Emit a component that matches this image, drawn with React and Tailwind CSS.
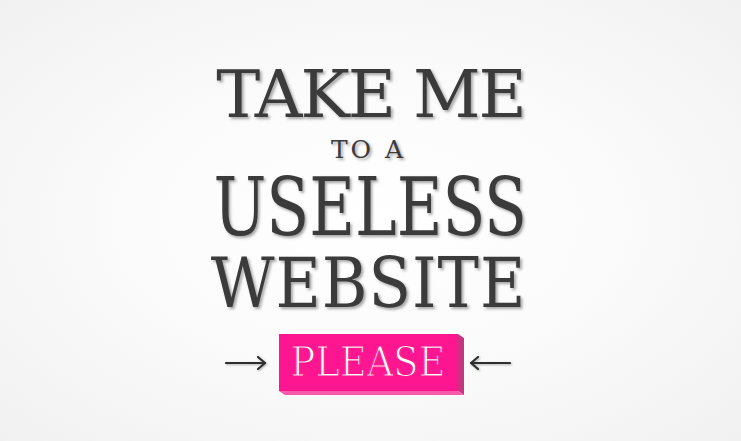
export default function App() {
  const shadow = '[text-shadow:2px_2px_3px_rgba(0,0,0,0.35)]';
  return (
    <div className="w-full h-[441px] overflow-hidden bg-[radial-gradient(ellipse_at_center,#ffffff_0%,#fbfbfb_45%,#f1f1f1_100%)] font-['DejaVu_Serif',serif] text-[#3b3b3b]">
      <div className="flex flex-col items-center pt-[62px]">
        <div className={`text-[66px] leading-[66px] tracking-[-2px] ${shadow}`}>TAKE ME</div>
        <div className={`mt-[9px] mr-[4px] text-[25px] leading-[25px] tracking-[3px] ${shadow}`}>TO A</div>
        <div className={`mt-[5px] text-[81px] leading-[81px] font-stretch-condensed scale-x-[0.86] ${shadow}`}>USELESS</div>
        <div className={`mt-[1px] mr-[4px] text-[69px] leading-[69px] font-stretch-condensed tracking-[1px] ${shadow}`}>WEBSITE</div>
        <div className="mt-[16px] mr-[6px] flex items-center">
          <Arrow dir="right" />
          <div className="relative ml-[12px] mr-[11px]">
            <div className="w-[179px] h-[57px] bg-[#fe1690] flex items-center justify-center text-white text-[41px] leading-[41px] font-stretch-condensed [-webkit-text-stroke:1.2px_#fe1690]">
              PLEASE
            </div>
            <div className="absolute left-full top-0 w-[6px] h-full bg-[#c8357f] origin-top-left skew-y-[34deg]" />
            <div className="absolute top-full left-0 w-full h-[4px] bg-[#f75aa8] origin-top-left skew-x-[56deg]" />
          </div>
          <Arrow dir="left" />
        </div>
      </div>
    </div>
  );
}

function Arrow({ dir }) {
  return (
    <svg width="42" height="16" viewBox="0 0 42 16" className="drop-shadow-[1px_1px_1px_rgba(0,0,0,0.3)]">
      {dir === 'right' ? (
        <g fill="none" stroke="#2e2e2e" strokeWidth="2.2" strokeLinecap="round" strokeLinejoin="round">
          <path d="M1 8 H40" />
          <path d="M33 2 L40 8 L33 14" />
        </g>
      ) : (
        <g fill="none" stroke="#2e2e2e" strokeWidth="2.2" strokeLinecap="round" strokeLinejoin="round">
          <path d="M2 8 H41" />
          <path d="M9 2 L2 8 L9 14" />
        </g>
      )}
    </svg>
  );
}
